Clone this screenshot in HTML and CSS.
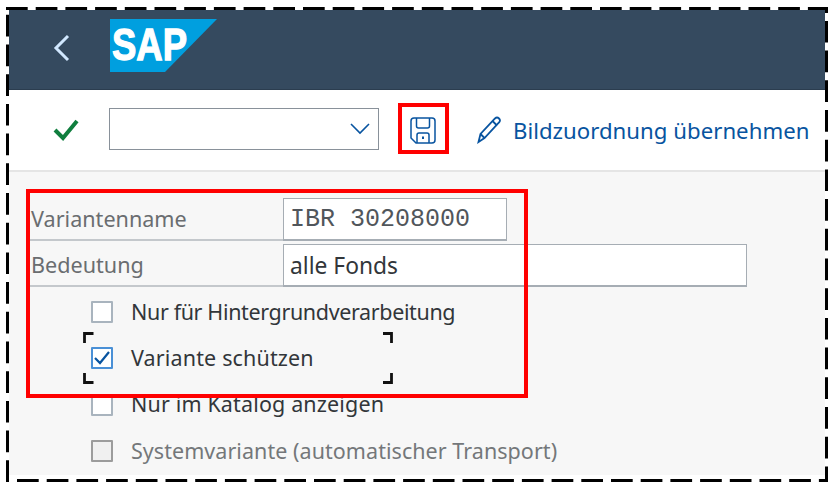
FILE: index.html
```html
<!DOCTYPE html>
<html lang="de">
<head>
  <meta charset="UTF-8">
  <title>Variantenattribute</title>
  <link rel="stylesheet" href="styles.css">
</head>
<body>
  <div class="page">
    <header class="shell">
      <svg class="back" width="20" height="30" viewBox="0 0 20 30"><path d="M16 3 4 15l12 12" fill="none" stroke="#d1e8ff" stroke-width="3"/></svg>
      <svg class="logo" width="108" height="54" viewBox="0 0 108 54">
        <polygon points="0,0 107,0 55,53 0,53" fill="#009fdf"/>
        <text x="2" y="41" textLength="75" lengthAdjust="spacingAndGlyphs" class="logo-text">SAP</text>
      </svg>
    </header>

    <div class="toolbar">
      <svg class="ok" width="28" height="24" viewBox="0 0 28 24"><path d="M3 13l8 8L25 4" fill="none" stroke="#107e3e" stroke-width="4"/></svg>
      <div class="select">
        <svg width="20" height="12" viewBox="0 0 20 12"><path d="M1 1l9 9 9-9" fill="none" stroke="#0854a0" stroke-width="1.6"/></svg>
      </div>
      <svg class="save" width="26" height="27" viewBox="0 0 26 27" fill="none" stroke="#0854a0" stroke-width="1.5">
        <path d="M4 1h18q3 0 3 3v19q0 3-3 3H6l-5-5V4q0-3 3-3z"/>
        <path d="M6.500 1v8q0 2 2 2h9q2 0 2-2V1"/>
        <path d="M7 26v-8q0-2 2-2h8q2 0 2 2v8"/>
        <rect x="12" y="19.500" width="2" height="2.500" fill="#0854a0" stroke="none"/>
      </svg>
      <a class="action" href="#">
        <svg width="25" height="29" viewBox="0 0 25 29" fill="none" stroke="#0854a0" stroke-width="1.8"><path d="M1.500 27l2-8L18 3.500q2-2 4 0t0 4L7.500 23z"/><path d="M3.500 19l4 4M15.500 6l4.500 4.500"/></svg>
        <span>Bildzuordnung übernehmen</span>
      </a>
    </div>

    <main class="content">
      <div class="form-row">
        <label class="form-label">Variantenname</label>
        <div class="input input-name">IBR 30208000</div>
      </div>
      <div class="form-row form-row-2">
        <label class="form-label">Bedeutung</label>
        <div class="input input-text">alle Fonds</div>
      </div>
      <ul class="checks">
        <li class="tight"><span class="cb"></span>Nur für Hintergrundverarbeitung</li>
        <li class="wide">
          <span class="cb cb-on"><svg width="18" height="16" viewBox="0 0 18 16"><path d="M2 8l5 5 9-11" fill="none" stroke="#0854a0" stroke-width="2.200"/></svg></span>
          Variante schützen
        </li>
        <li class="wide"><span class="cb"></span>Nur im Katalog anzeigen</li>
        <li class="off"><span class="cb"></span>Systemvariante (automatischer Transport)</li>
      </ul>
    </main>

    <div class="mark mark-save"></div>
    <div class="mark mark-form"></div>
    <svg class="focus" width="311" height="52" viewBox="0 0 311 52" fill="none" stroke="#111" stroke-width="2.800">
      <path d="M1.500 11V1.500h9M300 1.500h8.500V11M1.500 41v9.500h9M300 50.500h8.500V41"/>
    </svg>
    <svg class="frame" width="832" height="487" viewBox="0 0 832 487" fill="none" stroke="#000" stroke-width="3" stroke-dasharray="21.700 8">
      <path d="M6 8.500H828"/>
      <path d="M826.500 8.500V482" stroke-dashoffset="17.300"/>
      <path d="M17 480.500H828"/>
      <path d="M7.500 14.800V482"/>
    </svg>
  </div>
</body>
</html>
```

FILE: styles.css
```css
body {
  margin: 0;
  background: #fff;
  font-family: 'Noto Sans', sans-serif;
  color: #32363a;
}
.page {
  position: relative;
  width: 832px;
  height: 487px;
  box-sizing: border-box;
  padding: 10px 7px 12px 9px;
  display: flex;
  flex-direction: column;
  overflow: hidden;
}
.shell {
  flex: 0 0 80px;
  box-sizing: border-box;
  background: #354a5f;
  border-bottom: 1px solid #2b3d4f;
  display: flex;
  align-items: flex-start;
  padding: 9px 0 0 43px;
}
.back {
  margin-top: 14px;
}
.logo {
  margin-left: 38px;
}
.logo-text {
  font-family: 'Liberation Sans', sans-serif;
  font-weight: 700;
  font-size: 45px;
  fill: #fff;
  stroke: #fff;
  stroke-width: 1.300px;
}
.toolbar {
  flex: 0 0 82px;
  box-sizing: border-box;
  background: #fff;
  border-bottom: 2px solid #e5e5e5;
  display: flex;
  align-items: center;
  padding-left: 43px;
  padding-bottom: 2px;
}
.select {
  width: 270px;
  height: 42px;
  box-sizing: border-box;
  margin-left: 29px;
  border: 1px solid #89919a;
  display: flex;
  align-items: center;
  justify-content: flex-end;
  padding-right: 8px;
}
.save {
  margin-left: 31px;
  margin-top: 2px;
}
.action {
  display: flex;
  align-items: center;
  gap: 11px;
  margin-left: 41px;
  color: #0854a0;
  text-decoration: none;
  font-size: 22.200px;
  letter-spacing: 0.020px;
}
.action span {
  padding-top: 2px;
}
.content {
  flex: 1;
  background: #f7f7f7;
  padding: 21px 0 0;
}
.form-row {
  display: flex;
  align-items: flex-end;
  height: 48px;
  box-sizing: border-box;
  border-bottom: 2px solid #c4c8cc;
  margin-left: 21px;
  width: 255px;
  flex-wrap: nowrap;
}
.form-row-2 {
  height: 46px;
}
.form-label {
  flex: 0 0 252px;
  padding-left: 1px;
  padding-bottom: 6px;
  font-size: 21.600px;
  color: #6a6d70;
}
.input {
  flex: 0 0 auto;
  box-sizing: border-box;
  height: 43px;
  margin-bottom: -2px;
  background: #fff;
  border: 1px solid #a6adb4;
  border-bottom-width: 2px;
  display: flex;
  align-items: center;
  padding-left: 7px;
}
.input-name {
  width: 224px;
  font-family: 'Liberation Mono', monospace;
  font-size: 25px;
  color: #51565b;
  padding-left: 6px;
}
.input-text {
  width: 464px;
  padding-left: 6px;
  font-size: 22.800px;
}
.checks {
  list-style: none;
  margin: 0;
  padding: 1px 0 0 82px;
}
.checks li {
  height: 46.300px;
  display: flex;
  align-items: center;
  font-size: 21.500px;
}
.checks .tight {
  letter-spacing: -0.360px;
}
.checks .wide {
  letter-spacing: 0.150px;
}
.cb {
  flex: 0 0 auto;
  width: 22px;
  height: 22px;
  box-sizing: border-box;
  margin: 2px 18px 0 0;
  background: #fff;
  border: 2px solid #a9b4be;
  border-radius: 1px;
  display: flex;
  align-items: center;
  justify-content: center;
}
.cb-on {
  border-color: #4a90d6;
}
.off {
  color: #74777a;
  letter-spacing: 0.050px;
}
.off .cb {
  background: #f0f0f0;
  border-color: #9c9c9c;
}
.mark {
  position: absolute;
  box-sizing: border-box;
  border: 4px solid #f00;
}
.mark-save {
  left: 398px;
  top: 103px;
  width: 51px;
  height: 51px;
}
.mark-form {
  left: 26px;
  top: 189px;
  width: 502px;
  height: 209px;
}
.focus {
  position: absolute;
  left: 83px;
  top: 332px;
}
.frame {
  position: absolute;
  left: 0;
  top: 0;
}
```
